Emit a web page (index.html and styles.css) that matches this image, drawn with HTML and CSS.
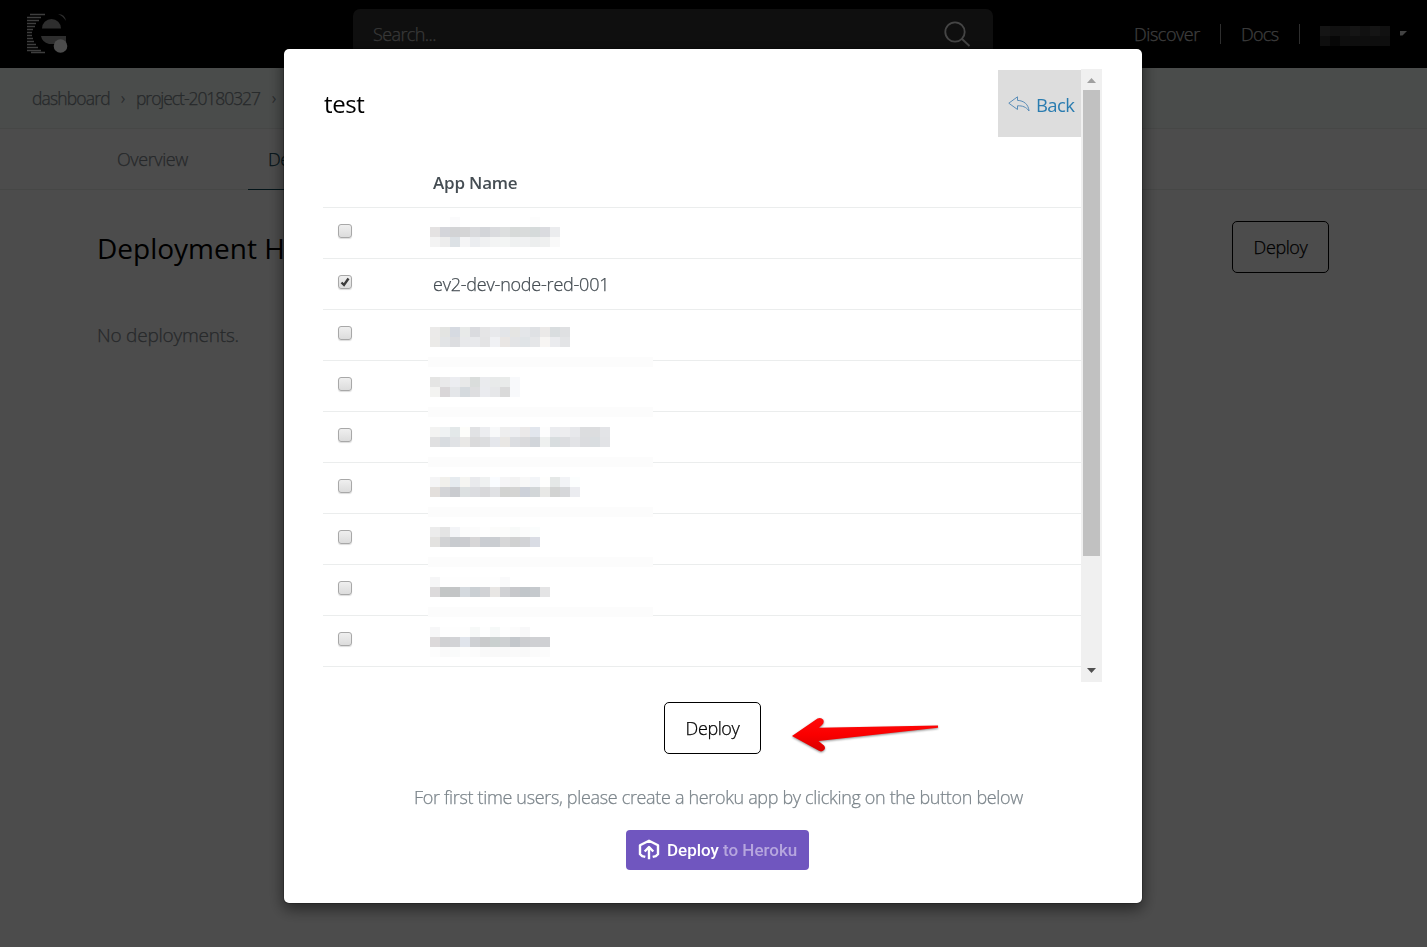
FILE: index.html
```html
<!DOCTYPE html>
<html lang="en">
<head>
<meta charset="utf-8">
<title>Deployment</title>
<link rel="stylesheet" href="styles.css">
</head>
<body>
<header class="topbar">
  <svg class="logo" width="42" height="42" viewBox="0 0 42 42">
    <path class="logo-lines" d="M3 1.5H18M0 4.5H14M0 7.5H12M0 10.5H9M0 13.5H8M0 16.5H6M0 19.5H5M0 22.5H5M0 25.5H6M0 28.5H7M0 31.5H9M0 34.5H11M0 37.500H14M4 39.500H18"/>
    <path class="logo-e" d="M15 15.500a9.500 9.500 0 0 1 19 0zM14 23H39V29Q30 25 28 31H22Q15 29 14 23zM31 1Q38 1 39 8Q36 3 31 1z"/>
    <circle class="logo-dot" cx="33.5" cy="33" r="6.8"/>
  </svg>
  <div class="search">
    <span class="search-text">Search...</span>
    <svg class="search-icon" width="27" height="27" viewBox="0 0 27 27"><circle cx="11" cy="11" r="9.7"/><path d="M18 18l7.5 7"/></svg>
  </div>
  <nav class="links">
    <span class="link discover">Discover</span><i class="bar"></i>
    <span class="link docs">Docs</span><i class="bar"></i>
    <svg class="user" width="70" height="20" viewBox="0 0 70 20" shape-rendering="crispEdges"><path fill="#303030" d="M0 0h70v20H0z"/><path fill="#484848" d="M0 0h10v10H0zM30 0h10v10H30zM50 0h10v10H50z"/><path fill="#3a3a3a" d="M10 0h20v10H10zM40 0h10v10H40zM60 0h10v10H60z"/><path fill="#181818" d="M10 10h10v10H10z"/></svg>
    <svg class="caret" width="7" height="5" viewBox="0 0 7 5"><path d="M0 0h7L2.5 4.5H0z"/></svg>
  </nav>
</header>
<div class="crumbs"><span class="c1">dashboard</span><span class="sep">›</span><span class="c2">project-20180327</span><span class="sep">›</span></div>
<div class="tabs"><span class="tab">Overview</span><span class="tab active">Deployment</span></div>
<main class="page">
  <div class="page-head"><h1 class="page-title">Deployment History</h1><button class="btn">Deploy</button></div>
  <p class="empty">No deployments.</p>
</main>
<div class="overlay">
  <section class="modal">
    <div class="scroller">
      <div class="content">
        <div class="modal-head">
          <h2 class="modal-title">test</h2>
          <a class="back"><svg width="22" height="16" viewBox="0 0 22 16"><path d="M.8 7.2L9.5 .8V4.4C16 4.6 20.5 8.5 21 15C18 10.8 14.5 9.7 9.5 9.8V13.5Z"/></svg><span>Back</span></a>
        </div>
        <div class="row head"><span class="name">App Name</span></div>
        <div id="apps"></div>
      </div>
      <div class="scrollbar">
        <svg width="9" height="5" viewBox="0 0 9 5"><path fill="#a0a0a0" d="M4.5 0L9 5H0z"/></svg>
        <div class="thumb"></div>
        <svg class="down" width="9" height="5" viewBox="0 0 9 5"><path fill="#505050" d="M0 0h9L4.5 5z"/></svg>
      </div>
    </div>
    <div class="actions">
      <button class="btn">Deploy</button>
      <svg class="arrow" width="152" height="40" viewBox="0 0 152 40">
        <defs><linearGradient id="red" x1="0" y1="0" x2="0" y2="1"><stop offset="0" stop-color="#ff0a0a"/><stop offset=".5" stop-color="#fa0000"/><stop offset="1" stop-color="#d80000"/></linearGradient></defs>
        <path fill="url(#red)" d="M2 21L27.5 3.6Q31 2 33.300 4.800Q34.500 8 32 10L29 12.700L148 10.600V12.800L28.500 26L34 30.500Q36 33 34 35Q31.500 37.500 28.500 35.600Z"/>
      </svg>
    </div>
    <p class="hint"><span>For first time users, please create a heroku app by clicking on the button below</span></p>
    <a class="heroku">
      <svg width="22" height="22" viewBox="0 0 22 22"><path d="M7.300 17.800L4.200 17.100L2 15.200V6.300L11 1.700L20 6.300V15.200L17.800 17.100L14.700 17.800M11 20.300V8.500M6.700 12.500L11 8L15.300 12.500"/></svg>
      <span class="h1">Deploy</span><span class="h2">to Heroku</span>
    </a>
  </section>
</div>
<script src="app.js"></script>
</body>
</html>
```
FILE: styles.css
```css
* { box-sizing: border-box; }
body { margin: 0; height: 947px; overflow: hidden; background: #fff; font-family: "Open Sans", "Noto Sans", sans-serif; font-weight: 300; font-size: 18px; color: #555c62; -webkit-text-stroke: .25px currentColor; }
h1, h2, p { margin: 0; font-weight: 300; }
.topbar { height: 68px; background: #000; display: grid; grid-template-columns: 353px 640px 1fr; align-items: start; }
.logo { margin: 13px 0 0 27px; }
.logo-lines { stroke: #cfcfcf; stroke-width: 1.6; fill: none; }
.logo-e { fill: #999; }
.logo-dot { fill: #fff; }
.search { height: 50px; margin-top: 9px; background: #333; border-radius: 7px; display: flex; justify-content: space-between; padding: 0 22px 0 20px; color: #bbb; }
.search-text { line-height: 50px; letter-spacing: -.6px; }
.search-icon { margin-top: 12px; fill: none; stroke: #e8e8e8; stroke-width: 1.8; }
.links { height: 68px; display: flex; align-items: center; padding-left: 141px; color: #ccc; }
.link { white-space: nowrap; }
.discover { width: 66px; letter-spacing: -.45px; }
.docs { width: 38px; letter-spacing: -.7px; }
.bar { width: 1px; height: 20px; background: #999; margin: 0 20px; }
.user { margin-top: 4px; }
.caret { margin: -2px 0 0 10px; fill: #ddd; }
.crumbs { height: 61px; background: #f7fefa; border-bottom: 1px solid #e9edeb; display: flex; align-items: center; padding-left: 32px; color: #7f888e; white-space: nowrap; font-size: 17.5px; }
.c1 { width: 78px; letter-spacing: -.85px; }
.c2 { width: 125px; letter-spacing: -1.05px; }
.sep { width: 26px; text-align: center; font-size: 16px; }
.tabs { height: 61px; border-bottom: 1px solid #e9edeb; display: flex; padding-left: 57px; color: #7f888e; }
.tab { width: 191px; text-align: center; line-height: 61px; letter-spacing: -.4px; }
.tab.active { width: 145px; height: 61px; padding-left: 20px; text-align: left; border-bottom: 1px solid #0d4556; color: #0d4556; }
.page { padding: 31px 98px 0 97px; }
.page-head { display: flex; justify-content: space-between; align-items: flex-start; }
.page-title { font-size: 28px; font-weight: 400; line-height: 54px; color: #000; -webkit-text-stroke: 0; }
.btn { width: 97px; height: 52px; border: 1px solid #000; border-radius: 5px; background: #fff; color: #000; font: inherit; letter-spacing: -.4px; padding: 0; }
.empty { margin-top: 45px; font-size: 19px; line-height: 30px; letter-spacing: -.22px; color: #7f888e; }
.overlay { position: fixed; inset: 0; background: rgba(0,0,0,.7); }
.modal { width: 860px; height: 856px; margin: 48px 0 0 283px; background: #fff; background-clip: padding-box; border: 1px solid rgba(0,0,0,.2); border-radius: 6px; box-shadow: 0 5px 15px rgba(0,0,0,.5); padding: 20px 40px 0 39px; }
.scroller { height: 613px; display: grid; grid-template-columns: 758px 21px; overflow: hidden; }
.modal-head { height: 68px; padding: 1px 0 0 1px; display: flex; justify-content: space-between; -webkit-text-stroke: 0; }
.modal-title { color: #000; font-size: 24px; font-weight: 400; line-height: 67px; letter-spacing: -.4px; }
.back { width: 83px; background: #ddd; display: flex; align-items: center; padding: 2px 0 0 10px; color: #2a7cb0; }
.back svg { fill: none; stroke: #5b8db8; stroke-width: 1; margin-top: -2px; }
.back span { margin-left: 6px; font-size: 18.5px; font-weight: 400; letter-spacing: -.65px; }
.row { height: 51px; border-bottom: 1px solid #ebeded; display: grid; grid-template-columns: 110px 1fr; align-items: start; }
.head { height: 71px; }
.name { line-height: 50px; color: #454d53; letter-spacing: -.22px; }
.head .name { grid-column: 2; font-weight: 600; font-size: 17px; line-height: 28px; margin-top: 32px; letter-spacing: -.2px; -webkit-text-stroke: 0; }
.check { width: 14px; height: 14px; margin: 16px 0 0 15px; border: 1px solid #a8a8a8; border-radius: 3px; background: linear-gradient(#efefef, #dcdcdc); box-shadow: 0 1px 1px #ddd; display: block; }
.check path { fill: none; stroke: #3c3c3c; stroke-width: 2.4; }
.mosaic { margin-left: -4px; overflow: visible; display: block; }
.scrollbar { height: 613px; background: #f0f0f0; display: flex; flex-direction: column; align-items: center; padding-top: 9px; }
.thumb { width: 17px; height: 466px; margin-top: 7px; background: #c1c1c1; }
.down { margin-top: 112px; }
.actions { margin: 20px 0 0 341px; display: flex; }
.arrow { margin: 13px 0 0 29px; filter: drop-shadow(0 1px 1px rgba(0,0,0,.45)); }
.hint { margin: 27px 0 0 91px; line-height: 30px; color: #7c858b; white-space: nowrap; letter-spacing: -.335px; }
.heroku { margin: 18px 0 0 303px; width: 183px; height: 40px; border-radius: 4px; background: #7056bf; display: flex; align-items: center; padding-left: 12px; color: #fff; font-family: Roboto, sans-serif; font-size: 17px; font-weight: 500; white-space: nowrap; -webkit-text-stroke: 0; }
.heroku svg { fill: none; stroke: #fff; stroke-width: 2.4; stroke-linejoin: round; }
.h1 { width: 52px; margin-left: 7px; }
.h2 { margin-left: 4px; color: #b6a6de; }
```
FILE: app.js
```js
// Each app is either a visible name or two or three strips of 10px tiles.
const apps = [
  { y: 9, tiles: ["ffffff ffffff fbfbfc ffffff ffffff ffffff ffffff ffffff ffffff ffffff fdfdfd", "e4e2e2 d4d5da d2d3d5 d5d5d6 d9dadd d3d5d9 dadbde dddfdf d7dad9 d9dbdb d5dada dadbdf ebecee", "f3f3f3 ededed dce1e5 f5f5f6 ebedf0 f0f1f2 f3f4f4 f3f5f4 eff1f1 f0f1f2 eceeee eff0f0 f9f9f9"] },
  { name: "ev2-dev-node-red-001", checked: true },
  { y: 17, band: 1, tiles: ["ebeae9 e3e4e2 d6dae1 e8eae9 dadbdf e5e5e6 e8e9ec e3e5e8 e5e5e3 e4e6e9 dfe1e4 ebe9e8 d9dddf dfe0e2", "ebeae8 e2e4e6 dcdde0 e8e9eb e8e9ec e4e4e5 f0f1f4 e9e6e4 e3e4e6 e0e4e7 e5e6e8 f7f5f3 eaebee e3e4e6"] },
  { y: 16, band: 1, tiles: ["e5e5e4 e9e9ea ecedf1 e8e9e9 dadddc eaebee e8eaea e9ebea f8f9fb", "f3f3f1 d9d6d8 e4e6e9 d5dade dedee0 eaebef e6e7e9 dadada f8f9fb"] },
  { y: 15, band: 1, tiles: ["f3f3f2 eff2f3 e3e8e9 fdfdfa e1e2e4 ecedf0 f8f9fa eeeeee edeef1 ebe9e9 e2e6ed fdfdfd ebecef ededef e7e8eb dcdddf dcdddf e3e4e7", "e0e0e1 d8dce0 e0e2e5 e9e8e6 dadadb dcdddf e5e7ec e9e7e4 dbdde1 dadadc d1d5da eef0ef d8dddf dcdde0 e2e3e6 dbdcdf d9dde0 e2e3e6"] },
  { y: 14, band: 1, tiles: ["f5f5f6 f1f0ec e6ebef f5f5f2 e9eaed eff1f1 fafcff f5f5f6 f3f3f3 f8f8f8 f3f5f8 fefefd e5e8e7 f2f3f6 fcfefe", "e3dfdc d3d4d7 c9cbcf dce0e1 dbdce0 d8d8da e0e1e4 d2d3d1 d4d4d3 cdd1d9 d2d6d8 e8e8e6 d2d3d2 d6d7da ebecf0"] },
  { y: 13, band: 1, tiles: ["ececec e4e4e4 f3f4f7 fcfcfc fcfcfc fefefe fcfcfb fcfcfb f8faf9 fcfcfc fbfdfd", "e3e2e0 d1d2d4 c8cbcf cbccd0 d7d6d7 cacdd2 cacdd1 d7d7d8 d0d1d1 d2d3d6 d9dce4"] },
  { y: 12, band: 1, tiles: ["f6f6f7 fefefe fefefe fefefe fefefe fefefe fefefe fafafb", "dcdadb c3c6c6 c3c5c6 d4d9de cacfd3 d1d2d5 e8e6e4 d0d1d4 c7c8cb c1c6ca c5c9cd e4e4e5"] },
  { y: 11, tiles: ["f7f7f8 fefefe fefefe fefefe f7f9f8 fefefe f6f9f8 fefefe fcfcfc f8f8f9", "dcd9da d0d1d3 d2d3d6 e0e4eb ced0d3 c9cacb c9d0cf ced0d2 c3c7cb cccdd0 cfd0d3 cfd0d3", "fdfdfd fafafa fafbfb fdfdfd fcfcfc f9f9f9 f9f9f9 f9f9f9 fafafa f9f9f9 fbfbfb fcfcfc"] }
];
const strip = (line, y) => line.split(" ").map((c, i) => `<rect x="${2 + i * 10}" y="${y}" width="10" height="10" fill="#${c}"/>`).join("");
document.getElementById("apps").innerHTML = apps.map(a => {
  const mark = a.checked ? '<path d="M2.500 6.500L5 9L9.500 2.500"/>' : "";
  const label = a.name ? `<span class="name">${a.name}</span>` :
    `<svg class="mosaic" width="228" height="50" shape-rendering="crispEdges"><g transform="translate(-1 0)">${a.band ? `<rect x="0" y="${a.y + 30}" width="225" height="10" fill="#fcfcfc"/>` : ""}${a.tiles.map((t, i) => strip(t, a.y + i * 10)).join("")}</g></svg>`;
  return `<div class="row"><svg class="check" viewBox="0 0 12 12">${mark}</svg>${label}</div>`;
}).join("");
```
